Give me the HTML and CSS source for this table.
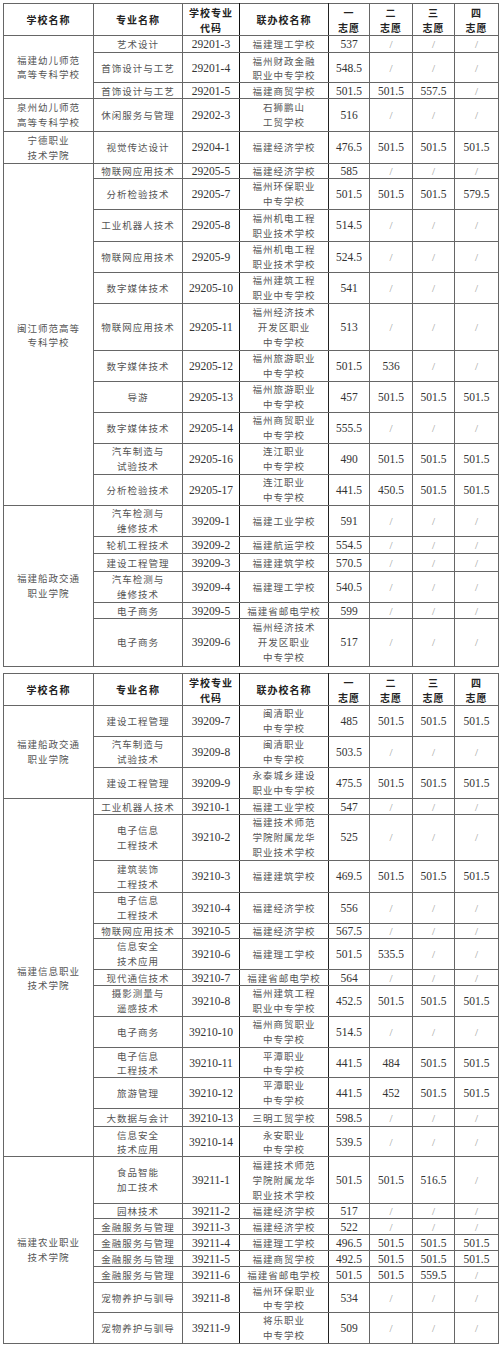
FILE: index.html
```html
<!DOCTYPE html>
<html lang="zh-CN">
<head>
<meta charset="utf-8">
<title>联办校志愿表</title>
<link rel="stylesheet" href="styles.css">
</head>
<body>
<table class="sheet">
<colgroup><col class="c1"><col class="c2"><col class="c3"><col class="c4"><col class="c5"><col class="c6"><col class="c7"><col class="c8"></colgroup>
<tr class="head"><th>学校名称</th><th>专业名称</th><th class="code">学校专业<br>代码</th><th class="lb">联办校名称</th><th>一<br>志愿</th><th>二<br>志愿</th><th>三<br>志愿</th><th>四<br>志愿</th></tr>
<tr class="h17"><td class="cn" rowspan="3">福建幼儿师范<br>高等专科学校</td><td class="cn">艺术设计</td><td class="num code">29201-3</td><td class="cn lb">福建理工学校</td><td class="num">537</td><td class="sl">/</td><td class="sl">/</td><td class="sl">/</td></tr>
<tr class="h30"><td class="cn">首饰设计与工艺</td><td class="num code">29201-4</td><td class="cn lb">福州财政金融<br>职业中专学校</td><td class="num">548.5</td><td class="sl">/</td><td class="sl">/</td><td class="sl">/</td></tr>
<tr class="h16"><td class="cn">首饰设计与工艺</td><td class="num code">29201-5</td><td class="cn lb">福建商贸学校</td><td class="num">501.5</td><td class="num">501.5</td><td class="num">557.5</td><td class="sl">/</td></tr>
<tr class="h33 sep"><td class="cn">泉州幼儿师范<br>高等专科学校</td><td class="cn">休闲服务与管理</td><td class="num code">29202-3</td><td class="cn lb">石狮鹏山<br>工贸学校</td><td class="num">516</td><td class="sl">/</td><td class="sl">/</td><td class="sl">/</td></tr>
<tr class="h32 sep"><td class="cn">宁德职业<br>技术学院</td><td class="cn">视觉传达设计</td><td class="num code">29204-1</td><td class="cn lb">福建经济学校</td><td class="num">476.5</td><td class="num">501.5</td><td class="num">501.5</td><td class="num">501.5</td></tr>
<tr class="h15 sep"><td class="cn" rowspan="11">闽江师范高等<br>专科学校</td><td class="cn">物联网应用技术</td><td class="num code">29205-5</td><td class="cn lb">福建经济学校</td><td class="num">585</td><td class="sl">/</td><td class="sl">/</td><td class="sl">/</td></tr>
<tr class="h31"><td class="cn">分析检验技术</td><td class="num code">29205-7</td><td class="cn lb">福州环保职业<br>中专学校</td><td class="num">501.5</td><td class="num">501.5</td><td class="num">501.5</td><td class="num">579.5</td></tr>
<tr class="h32"><td class="cn">工业机器人技术</td><td class="num code">29205-8</td><td class="cn lb">福州机电工程<br>职业技术学校</td><td class="num">514.5</td><td class="sl">/</td><td class="sl">/</td><td class="sl">/</td></tr>
<tr class="h31"><td class="cn">物联网应用技术</td><td class="num code">29205-9</td><td class="cn lb">福州机电工程<br>职业技术学校</td><td class="num">524.5</td><td class="sl">/</td><td class="sl">/</td><td class="sl">/</td></tr>
<tr class="h31"><td class="cn">数字媒体技术</td><td class="num code">29205-10</td><td class="cn lb">福州建筑工程<br>职业中专学校</td><td class="num">541</td><td class="sl">/</td><td class="sl">/</td><td class="sl">/</td></tr>
<tr class="h47"><td class="cn">物联网应用技术</td><td class="num code">29205-11</td><td class="cn lb">福州经济技术<br>开发区职业<br>中专学校</td><td class="num">513</td><td class="sl">/</td><td class="sl">/</td><td class="sl">/</td></tr>
<tr class="h31"><td class="cn">数字媒体技术</td><td class="num code">29205-12</td><td class="cn lb">福州旅游职业<br>中专学校</td><td class="num">501.5</td><td class="num">536</td><td class="sl">/</td><td class="sl">/</td></tr>
<tr class="h31"><td class="cn">导游</td><td class="num code">29205-13</td><td class="cn lb">福州旅游职业<br>中专学校</td><td class="num">457</td><td class="num">501.5</td><td class="num">501.5</td><td class="num">501.5</td></tr>
<tr class="h31"><td class="cn">数字媒体技术</td><td class="num code">29205-14</td><td class="cn lb">福州商贸职业<br>中专学校</td><td class="num">555.5</td><td class="sl">/</td><td class="sl">/</td><td class="sl">/</td></tr>
<tr class="h31"><td class="cn">汽车制造与<br>试验技术</td><td class="num code">29205-16</td><td class="cn lb">连江职业<br>中专学校</td><td class="num">490</td><td class="num">501.5</td><td class="num">501.5</td><td class="num">501.5</td></tr>
<tr class="h31"><td class="cn">分析检验技术</td><td class="num code">29205-17</td><td class="cn lb">连江职业<br>中专学校</td><td class="num">441.5</td><td class="num">450.5</td><td class="num">501.5</td><td class="num">501.5</td></tr>
<tr class="h31 sep"><td class="cn" rowspan="6">福建船政交通<br>职业学院</td><td class="cn">汽车检测与<br>维修技术</td><td class="num code">39209-1</td><td class="cn lb">福建工业学校</td><td class="num">591</td><td class="sl">/</td><td class="sl">/</td><td class="sl">/</td></tr>
<tr class="h17"><td class="cn">轮机工程技术</td><td class="num code">39209-2</td><td class="cn lb">福建航运学校</td><td class="num">554.5</td><td class="sl">/</td><td class="sl">/</td><td class="sl">/</td></tr>
<tr class="h18"><td class="cn">建设工程管理</td><td class="num code">39209-3</td><td class="cn lb">福建建筑学校</td><td class="num">570.5</td><td class="sl">/</td><td class="sl">/</td><td class="sl">/</td></tr>
<tr class="h31"><td class="cn">汽车检测与<br>维修技术</td><td class="num code">39209-4</td><td class="cn lb">福建理工学校</td><td class="num">540.5</td><td class="sl">/</td><td class="sl">/</td><td class="sl">/</td></tr>
<tr class="h16"><td class="cn">电子商务</td><td class="num code">39209-5</td><td class="cn lb">福建省邮电学校</td><td class="num">599</td><td class="sl">/</td><td class="sl">/</td><td class="sl">/</td></tr>
<tr class="h48"><td class="cn">电子商务</td><td class="num code">39209-6</td><td class="cn lb">福州经济技术<br>开发区职业<br>中专学校</td><td class="num">517</td><td class="sl">/</td><td class="sl">/</td><td class="sl">/</td></tr>
</table>

<table class="sheet second">
<colgroup><col class="c1"><col class="c2"><col class="c3"><col class="c4"><col class="c5"><col class="c6"><col class="c7"><col class="c8"></colgroup>
<tr class="head"><th>学校名称</th><th>专业名称</th><th class="code">学校专业<br>代码</th><th class="lb">联办校名称</th><th>一<br>志愿</th><th>二<br>志愿</th><th>三<br>志愿</th><th>四<br>志愿</th></tr>
<tr class="h31"><td class="cn" rowspan="3">福建船政交通<br>职业学院</td><td class="cn">建设工程管理</td><td class="num code">39209-7</td><td class="cn lb">闽清职业<br>中专学校</td><td class="num">485</td><td class="num">501.5</td><td class="num">501.5</td><td class="num">501.5</td></tr>
<tr class="h31"><td class="cn">汽车制造与<br>试验技术</td><td class="num code">39209-8</td><td class="cn lb">闽清职业<br>中专学校</td><td class="num">503.5</td><td class="sl">/</td><td class="sl">/</td><td class="sl">/</td></tr>
<tr class="h31"><td class="cn">建设工程管理</td><td class="num code">39209-9</td><td class="cn lb">永泰城乡建设<br>职业中专学校</td><td class="num">475.5</td><td class="num">501.5</td><td class="num">501.5</td><td class="num">501.5</td></tr>
<tr class="h16 sep"><td class="cn" rowspan="13">福建信息职业<br>技术学院</td><td class="cn">工业机器人技术</td><td class="num code">39210-1</td><td class="cn lb">福建工业学校</td><td class="num">547</td><td class="sl">/</td><td class="sl">/</td><td class="sl">/</td></tr>
<tr class="h46"><td class="cn">电子信息<br>工程技术</td><td class="num code">39210-2</td><td class="cn lb">福建技术师范<br>学院附属龙华<br>职业技术学校</td><td class="num">525</td><td class="sl">/</td><td class="sl">/</td><td class="sl">/</td></tr>
<tr class="h32"><td class="cn">建筑装饰<br>工程技术</td><td class="num code">39210-3</td><td class="cn lb">福建建筑学校</td><td class="num">469.5</td><td class="num">501.5</td><td class="num">501.5</td><td class="num">501.5</td></tr>
<tr class="h31"><td class="cn">电子信息<br>工程技术</td><td class="num code">39210-4</td><td class="cn lb">福建经济学校</td><td class="num">556</td><td class="sl">/</td><td class="sl">/</td><td class="sl">/</td></tr>
<tr class="h15"><td class="cn">物联网应用技术</td><td class="num code">39210-5</td><td class="cn lb">福建经济学校</td><td class="num">567.5</td><td class="sl">/</td><td class="sl">/</td><td class="sl">/</td></tr>
<tr class="h31"><td class="cn">信息安全<br>技术应用</td><td class="num code">39210-6</td><td class="cn lb">福建理工学校</td><td class="num">501.5</td><td class="num">535.5</td><td class="sl">/</td><td class="sl">/</td></tr>
<tr class="h16"><td class="cn">现代通信技术</td><td class="num code">39210-7</td><td class="cn lb">福建省邮电学校</td><td class="num">564</td><td class="sl">/</td><td class="sl">/</td><td class="sl">/</td></tr>
<tr class="h31"><td class="cn">摄影测量与<br>遥感技术</td><td class="num code">39210-8</td><td class="cn lb">福州建筑工程<br>职业中专学校</td><td class="num">452.5</td><td class="num">501.5</td><td class="num">501.5</td><td class="num">501.5</td></tr>
<tr class="h31"><td class="cn">电子商务</td><td class="num code">39210-10</td><td class="cn lb">福州商贸职业<br>中专学校</td><td class="num">514.5</td><td class="sl">/</td><td class="sl">/</td><td class="sl">/</td></tr>
<tr class="h30"><td class="cn">电子信息<br>工程技术</td><td class="num code">39210-11</td><td class="cn lb">平潭职业<br>中专学校</td><td class="num">441.5</td><td class="num">484</td><td class="num">501.5</td><td class="num">501.5</td></tr>
<tr class="h31"><td class="cn">旅游管理</td><td class="num code">39210-12</td><td class="cn lb">平潭职业<br>中专学校</td><td class="num">441.5</td><td class="num">452</td><td class="num">501.5</td><td class="num">501.5</td></tr>
<tr class="h18"><td class="cn">大数据与会计</td><td class="num code">39210-13</td><td class="cn lb">三明工贸学校</td><td class="num">598.5</td><td class="sl">/</td><td class="sl">/</td><td class="sl">/</td></tr>
<tr class="h30"><td class="cn">信息安全<br>技术应用</td><td class="num code">39210-14</td><td class="cn lb">永安职业<br>中专学校</td><td class="num">539.5</td><td class="sl">/</td><td class="sl">/</td><td class="sl">/</td></tr>
<tr class="h47 sep"><td class="cn" rowspan="8">福建农业职业<br>技术学院</td><td class="cn">食品智能<br>加工技术</td><td class="num code">39211-1</td><td class="cn lb">福建技术师范<br>学院附属龙华<br>职业技术学校</td><td class="num">501.5</td><td class="num">501.5</td><td class="num">516.5</td><td class="sl">/</td></tr>
<tr class="h15"><td class="cn">园林技术</td><td class="num code">39211-2</td><td class="cn lb">福建经济学校</td><td class="num">517</td><td class="sl">/</td><td class="sl">/</td><td class="sl">/</td></tr>
<tr class="h16"><td class="cn">金融服务与管理</td><td class="num code">39211-3</td><td class="cn lb">福建经济学校</td><td class="num">522</td><td class="sl">/</td><td class="sl">/</td><td class="sl">/</td></tr>
<tr class="h16"><td class="cn">金融服务与管理</td><td class="num code">39211-4</td><td class="cn lb">福建理工学校</td><td class="num">496.5</td><td class="num">501.5</td><td class="num">501.5</td><td class="num">501.5</td></tr>
<tr class="h16"><td class="cn">金融服务与管理</td><td class="num code">39211-5</td><td class="cn lb">福建商贸学校</td><td class="num">492.5</td><td class="num">501.5</td><td class="num">501.5</td><td class="num">501.5</td></tr>
<tr class="h16"><td class="cn">金融服务与管理</td><td class="num code">39211-6</td><td class="cn lb">福建省邮电学校</td><td class="num">501.5</td><td class="num">501.5</td><td class="num">559.5</td><td class="sl">/</td></tr>
<tr class="h30"><td class="cn">宠物养护与驯导</td><td class="num code">39211-8</td><td class="cn lb">福州环保职业<br>中专学校</td><td class="num">534</td><td class="sl">/</td><td class="sl">/</td><td class="sl">/</td></tr>
<tr class="h31"><td class="cn">宠物养护与驯导</td><td class="num code">39211-9</td><td class="cn lb">将乐职业<br>中专学校</td><td class="num">509</td><td class="sl">/</td><td class="sl">/</td><td class="sl">/</td></tr>
</table>
</body>
</html>
```
FILE: styles.css
```css
html, body {
  margin: 0;
  background: #ffffff;
}
body {
  padding: 3px 0 0 3px;
  font-family: "Noto Sans CJK SC", "Noto Sans CJK JP", sans-serif;
}
.sheet {
  border-collapse: collapse;
  table-layout: fixed;
  width: 496px;
  border: 1px solid #444;
}
.second {
  margin-top: 6px;
  border-top: 1px solid #888;
}
.c1 { width: 90px; }
.c2 { width: 89px; }
.c3 { width: 57px; }
.c4 { width: 89px; }
.c5 { width: 41px; }
.c6 { width: 43px; }
.c7 { width: 42px; }
.c8 { width: 44px; }

.sheet th,
.sheet td {
  border: 1px solid #666;
  padding: 0;
  text-align: center;
  vertical-align: middle;
  line-height: 14px;
  white-space: nowrap;
  overflow: hidden;
}
.sheet th {
  font-size: 10px;
  font-weight: bold;
  color: #222;
  letter-spacing: 1px;
  line-height: 15px;
}
.sheet .code {
  border-left: 1px solid #111;
  border-right: 1px solid #111;
}
.sheet .lb {
  border-right: 1px solid #222;
}
.sep td {
  border-top: 1px solid #222;
}
.cn {
  font-size: 9.5px;
  letter-spacing: 1px;
  color: #555;
}
.num {
  font-family: "Liberation Serif", serif;
  font-size: 11.5px;
  color: #333;
}
.sl {
  font-family: "Liberation Serif", serif;
  font-size: 11px;
  color: #999;
}
.head { height: 32px; }
.h15 { height: 15px; }
.h16 { height: 16px; }
.h17 { height: 17px; }
.h18 { height: 18px; }
.h30 { height: 30px; }
.h31 { height: 31px; }
.h32 { height: 32px; }
.h33 { height: 33px; }
.h46 { height: 46px; }
.h47 { height: 47px; }
.h48 { height: 48px; }
.h31 td, .h32 td, .h33 td,
.h46 td, .h47 td, .h48 td {
  line-height: 15px;
}
```
